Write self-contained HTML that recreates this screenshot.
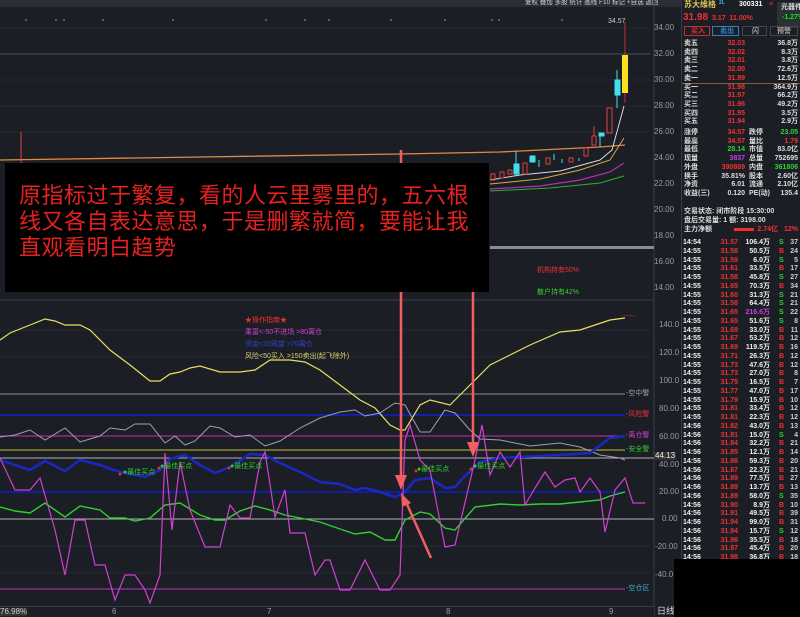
<!DOCTYPE html>
<html><head><meta charset="utf-8"><style>
*{margin:0;padding:0;box-sizing:border-box}
body{width:800px;height:617px;overflow:hidden;background:#1c1e26;font-family:"Liberation Sans","Noto Sans CJK SC",sans-serif;position:relative}
.a{position:absolute;white-space:nowrap;line-height:1}
.t{font-size:7px}
.ax{font-size:8px;color:#9a9ca4}
.r{color:#f23030}.g{color:#2fd02f}.w{color:#e8e8e8}.y{color:#e0d040}.m{color:#d040d0}
#rp div{position:absolute;white-space:nowrap;font-size:7px;line-height:1;font-weight:bold}
</style></head><body>
<div class="a" style="left:0;top:0;width:681px;height:7px;background:#2a2c36"></div>
<div class="a t w" style="left:525px;top:0;color:#cfd0d6;font-size:6.5px">复权 叠加 多股 统计 画线 F10 标记 +自选 返回</div>
<svg class="a" style="left:0;top:0" width="681" height="617">
<line x1="0" y1="54" x2="650" y2="54" stroke="#4a4c58" stroke-width="1"/>
<g stroke="#262833"><line x1="0" y1="28" x2="650" y2="28"/><line x1="0" y1="80" x2="650" y2="80"/><line x1="0" y1="106" x2="650" y2="106"/><line x1="0" y1="132" x2="650" y2="132"/></g>
<g fill="#a040e0"><circle cx="26" cy="20" r="1"/><circle cx="56" cy="20" r="1"/><circle cx="64" cy="20" r="1"/><circle cx="103" cy="20" r="1"/><circle cx="173" cy="20" r="1"/><circle cx="266" cy="20" r="1"/><circle cx="305" cy="20" r="1"/><circle cx="329" cy="20" r="1"/><circle cx="391" cy="20" r="1"/><circle cx="445" cy="20" r="1"/><circle cx="492" cy="20" r="1"/><circle cx="499" cy="20" r="1"/><circle cx="562" cy="20" r="1"/></g>
<line x1="654" y1="0" x2="654" y2="617" stroke="#3a3c46"/>
<polyline points="0,160 200,157 400,154 500,152 600,147 625,145" fill="none" stroke="#e08a40" stroke-width="1.3"/>
<polyline points="490,180 520,175 560,171 600,160 612,150 624,106" fill="none" stroke="#d8d8e0" stroke-width="1"/>
<polyline points="490,184 540,179 580,170 610,160 624,138" fill="none" stroke="#d0b040" stroke-width="1"/>
<polyline points="490,189 540,186 580,180 610,172 624,163" fill="none" stroke="#b030b0" stroke-width="1.2"/>
<polyline points="490,191 550,188 600,183 624,176" fill="none" stroke="#30b030" stroke-width="1"/>
<g stroke="#e04040" fill="none"><line x1="21" y1="132" x2="21" y2="165"/><rect x="491" y="174" width="4" height="6"/><rect x="500" y="172" width="4" height="6"/><rect x="508" y="170" width="4" height="4"/><rect x="523" y="163" width="4" height="11"/><rect x="546" y="158" width="4" height="6"/><rect x="569" y="158" width="4" height="4"/><rect x="584" y="148" width="4" height="8"/><rect x="592" y="136" width="4" height="9"/><line x1="594" y1="126" x2="594" y2="136"/><rect x="607" y="108" width="5" height="25"/></g>
<g fill="#40e0f0" stroke="#40e0f0"><line x1="516" y1="151" x2="516" y2="175"/><rect x="514" y="164" width="5" height="10"/><rect x="530" y="156" width="5" height="6"/><line x1="539" y1="160" x2="539" y2="167"/><line x1="554" y1="154" x2="554" y2="160"/><line x1="562" y1="159" x2="562" y2="163"/><line x1="579" y1="158" x2="579" y2="161"/><line x1="600" y1="134" x2="600" y2="147"/><rect x="599" y="133" width="5" height="3"/><line x1="617" y1="70" x2="617" y2="108"/><rect x="615" y="80" width="5" height="15"/></g>
<line x1="625" y1="22" x2="625" y2="103" stroke="#c03030"/>
<rect x="622" y="55" width="6" height="38" fill="#ffe020"/>
<rect x="490" y="246" width="164" height="3" fill="#8a8c94"/>
<line x1="0" y1="300" x2="654" y2="300" stroke="#3a3c46"/>
<line x1="0" y1="394" x2="625" y2="394" stroke="#8a8c94"/>
<line x1="0" y1="415" x2="625" y2="415" stroke="#1020a0" stroke-width="2"/>
<line x1="0" y1="436" x2="625" y2="436" stroke="#c030c0"/>
<line x1="0" y1="450" x2="625" y2="450" stroke="#a0a030" stroke-width="1.3"/>
<line x1="0" y1="458" x2="654" y2="458" stroke="#b0b0b8"/>
<line x1="0" y1="492" x2="625" y2="492" stroke="#1020a0" stroke-width="2"/>
<line x1="0" y1="519" x2="654" y2="519" stroke="#b0b0b8"/>
<line x1="0" y1="589" x2="625" y2="589" stroke="#c030c0"/>
<g stroke="#262833"><line x1="0" y1="330" x2="650" y2="330"/><line x1="0" y1="357" x2="650" y2="357"/><line x1="0" y1="546" x2="650" y2="546"/><line x1="0" y1="573" x2="650" y2="573"/></g>
<polyline fill="none" stroke="#e8e060" stroke-width="1.2" points="0,340 10,333 30,325 45,319 55,321 65,325 80,325 90,330 110,350 130,365 150,381 160,381 170,374 180,372 190,368 200,366 220,372 240,372 255,370 270,360 290,360 305,362 320,370 340,385 360,400 375,408 390,425 400,430 405,430 420,405 430,400 450,405 470,385 490,365 510,355 530,345 560,332 580,330 610,320 625,318"/>
<polyline fill="none" stroke="#a0a0a8" stroke-width="1" points="0,437 15,435 30,430 45,440 65,428 80,442 100,436 110,428 125,430 135,424 150,424 165,443 175,436 185,445 195,441 210,426 220,428 235,437 250,435 265,446 280,441 300,428 320,418 340,412 355,410 365,416 380,413 395,403 405,405 420,432 430,432 445,410 455,413 470,430 480,439 500,440 530,446 560,443 580,447 600,455 620,458 625,460"/>
<polyline fill="none" stroke="#1828c0" stroke-width="2.6" points="0,460 15,465 30,470 45,461 65,471 80,460 100,465 110,469 125,473 145,477 160,470 170,459 185,455 200,465 215,473 230,467 250,454 265,455 280,463 300,472 320,482 340,484 355,490 365,488 380,492 395,497 405,492 415,480 430,478 445,488 455,487 465,476 480,462 500,458 520,457 560,455 590,453 610,438 625,436"/>
<polyline fill="none" stroke="#30d030" stroke-width="1.4" points="0,507 15,511 30,513 45,503 65,517 80,506 100,510 110,518 125,518 135,521 150,518 165,505 180,503 200,515 215,520 225,520 240,511 255,506 270,510 285,515 300,518 320,522 340,529 355,534 370,532 385,540 395,540 405,520 420,512 430,514 445,528 455,530 475,507 500,504 520,505 540,504 560,504 580,502 600,500 610,496 625,492"/>
<polyline fill="none" stroke="#d040d0" stroke-width="1.2" points="0,458 15,490 30,490 40,478 55,530 65,575 75,520 85,520 95,565 105,565 115,600 125,575 135,575 145,590 150,603 160,575 165,453 172,530 180,462 190,510 205,547 220,547 230,505 240,518 250,518 260,462 265,452 275,517 285,490 290,533 305,533 315,575 325,560 330,560 340,590 350,590 365,560 380,590 390,590 400,575 405,440 410,425 420,460 430,470 445,547 455,545 475,460 482,425 490,475 500,452 510,467 520,452 525,505 535,488 545,472 555,487 565,480 575,478 580,492 590,478 600,492 605,532 615,490 625,478 633,503 645,503"/>
<g stroke="#f06060" stroke-width="2.5" fill="#f06060">
<line x1="401" y1="150" x2="401" y2="480"/><polygon points="395,475 407,475 401,490" stroke="none"/>
<line x1="473" y1="290" x2="473" y2="448"/><polygon points="467,442 479,442 473,457" stroke="none"/>
<line x1="431" y1="558" x2="406" y2="502"/><polygon points="401,493 411,503 402,507" stroke="none"/>
</g>
<line x1="473" y1="250" x2="473" y2="290" stroke="#c03030"/>
<g fill="#e03030"><circle cx="120" cy="474" r="1.5"/><circle cx="159" cy="468" r="1.5"/><circle cx="229" cy="468" r="1.5"/><circle cx="416" cy="471" r="1.5"/><circle cx="471" cy="469" r="1.5"/></g>
</svg>
<div class="a t r" style="left:245px;top:317px">★操作指南★</div>
<div class="a t m" style="left:245px;top:329px">乘富&lt;-50不进场 &gt;80离仓</div>
<div class="a t" style="left:245px;top:341px;color:#3040d0">资金&lt;20观望 &gt;70离仓</div>
<div class="a t" style="left:245px;top:353px;color:#d8d070">风险&lt;50买入 &gt;150卖出(起飞除外)</div>
<div class="a t r" style="left:537px;top:267px">机构持有50%</div>
<div class="a t g" style="left:537px;top:289px">散户持有42%</div>
<div class="a t g" style="left:123px;top:469px">●最佳买点</div>
<div class="a t g" style="left:160px;top:463px">●最佳买点</div>
<div class="a t g" style="left:230px;top:463px">●最佳买点</div>
<div class="a t g" style="left:417px;top:466px">●最佳买点</div>
<div class="a t g" style="left:473px;top:463px">●最佳买点</div>
<div class="a t" style="left:626px;top:390px;color:#a0a0a8">-空中警</div>
<div class="a t r" style="left:626px;top:411px">-风险警</div>
<div class="a t m" style="left:626px;top:432px">-离仓警</div>
<div class="a t g" style="left:626px;top:446px">-安全警</div>
<div class="a t" style="left:626px;top:585px;color:#40b0d0">-空仓区</div>
<div class="a t r" style="left:623px;top:313px">-----</div>
<div class="a t w" style="left:608px;top:18px;color:#ccc">34.57</div>
<div class="a" style="left:5px;top:163px;width:484px;height:129px;background:#000"></div>
<div class="a" style="left:19px;top:181px;font-size:22px;line-height:26px;letter-spacing:0.5px;color:#e82020;font-family:'Noto Sans CJK SC',sans-serif">原指标过于繁复，看的人云里雾里的，五六根<br>线又各自表达意思，于是删繁就简，要能让我<br>直观看明白趋势</div>
<div class="a ax" style="left:654px;top:24px">34.00</div><div class="a ax" style="left:654px;top:50px">32.00</div><div class="a ax" style="left:654px;top:76px">30.00</div><div class="a ax" style="left:654px;top:102px">28.00</div><div class="a ax" style="left:654px;top:128px">26.00</div><div class="a ax" style="left:654px;top:154px">24.00</div><div class="a ax" style="left:654px;top:180px">22.00</div><div class="a ax" style="left:654px;top:206px">20.00</div><div class="a ax" style="left:654px;top:232px">18.00</div><div class="a ax" style="left:654px;top:258px">16.00</div><div class="a ax" style="left:654px;top:284px">14.00</div>
<div class="a ax" style="left:659px;top:321px">140.0</div><div class="a ax" style="left:659px;top:349px">120.0</div><div class="a ax" style="left:659px;top:377px">100.0</div><div class="a ax" style="left:659px;top:405px">80.00</div><div class="a ax" style="left:659px;top:433px">60.00</div><div class="a ax" style="left:654px;top:452px;color:#eee;background:#333;padding:0 1px">44.13</div><div class="a ax" style="left:659px;top:461px">40.00</div><div class="a ax" style="left:659px;top:488px">20.00</div><div class="a ax" style="left:662px;top:515px">0.00</div><div class="a ax" style="left:655px;top:543px">-20.00</div><div class="a ax" style="left:655px;top:571px">-40.0</div>
<div class="a" style="left:0;top:606px;width:654px;height:11px;background:#1c1e26;border-top:1px solid #3a3c46"></div>
<div class="a ax" style="left:0;top:608px;color:#ccc;background:#333">76.98%</div>
<div class="a ax" style="left:112px;top:608px">6</div><div class="a ax" style="left:267px;top:608px">7</div><div class="a ax" style="left:446px;top:608px">8</div><div class="a ax" style="left:609px;top:608px">9</div>
<div class="a ax" style="left:657px;top:607px;color:#ddd;font-size:9px">日线</div>
<div id="rp" class="a" style="left:681px;top:0;width:119px;height:617px;background:#1c1e26;border-left:1px solid #3a3c46">
<div style="left:2px;top:1px;color:#d8c850;font-size:8px">苏大维格</div><div style="left:37px;top:1px;color:#40b0e0;font-size:5px">2L</div><div style="left:57px;top:1px;color:#fff;font-size:7px">300331</div><div style="left:87px;top:1px;color:#e03030">≡</div>
<div style="left:95px;top:2px;width:24px;height:26px;background:#2e3038"></div><div style="left:99px;top:4px;color:#ddd">元器件</div><div style="left:100px;top:14px;color:#2fd02f;background:#1a3a22">-1.27%</div>
<div style="left:1px;top:13px;color:#f23030;font-size:10px">31.98</div><div style="left:30px;top:15px;color:#f23030">3.17&nbsp; 11.00%</div>
<div style="left:2px;top:26px;width:26px;height:10px;border:1px solid #c03030"></div><div style="left:9px;top:28px;color:#e03030">买入</div>
<div style="left:30px;top:26px;width:27px;height:10px;border:1px solid #3080c0"></div><div style="left:38px;top:28px;color:#3080c0">卖出</div>
<div style="left:60px;top:26px;width:25px;height:10px;border:1px solid #444"></div><div style="left:70px;top:28px;color:#aaa">闪</div>
<div style="left:88px;top:26px;width:28px;height:10px;border:1px solid #444"></div><div style="left:95px;top:28px;color:#aaa">预警</div>
<div style="left:0;top:83px;width:119px;height:1px;background:#806030"></div>
</div>
<div class="a" style="left:674px;top:559px;width:126px;height:58px;background:#000"></div>
<script>
var rp=document.getElementById('rp');
function d(x,y,t,c,al){var e=document.createElement('div');e.textContent=t;e.style.top=y+'px';e.style.color=c;if(al){e.style.right=(119-x)+'px'}else{e.style.left=x+'px'}rp.appendChild(e)}
var ob=[['卖五','32.03','36.8万'],['卖四','32.02','8.3万'],['卖三','32.01','3.8万'],['卖二','32.00','72.6万'],['卖一','31.99','12.5万'],['买一','31.98','364.9万'],['买二','31.97','66.2万'],['买三','31.96','49.2万'],['买四','31.95','3.5万'],['买五','31.94','2.9万']];
ob.forEach(function(r,i){var y=40+i*8.7;d(2,y,r[0],'#ddd');d(64,y,r[1],'#f23030',1);d(117,y,r[2],'#ddd',1)});
var st=[['涨停','34.57','#f23030','跌停','23.05','#2fd02f'],['最高','34.57','#f23030','量比','1.79','#f23030'],['最低','28.14','#2fd02f','市值','83.0亿','#ddd'],['现量','3837','#c040e0','总量','752695','#ddd'],['外盘','390889','#f23030','内盘','361806','#2fd02f'],['换手','35.81%','#ddd','股本','2.60亿','#ddd'],['净资','6.01','#ddd','流通','2.10亿','#ddd'],['收益(三)','0.120','#ddd','PE(动)','135.4','#ddd']];
st.forEach(function(r,i){var y=129+i*8.7;d(2,y,r[0],'#ddd');d(64,y,r[1],r[2],1);d(67,y,r[3],'#ddd');d(117,y,r[4],r[5],1)});
d(2,208,'交易状态: 闭市阶段 15:30:00','#ddd');d(2,217,'盘后交易量: 1  额: 3198.00','#ddd');
d(2,226,'主力净额','#ddd');
var b=document.createElement('div');b.style.cssText='left:52px;top:228px;width:20px;height:3px;background:#f23030';rp.appendChild(b);
d(97,226,'2.74亿','#f23030',1);d(117,226,'12%','#f23030',1);
var tk=[['14:54','31.57','106.4万','S',37],['14:55','31.58','50.5万','B',24],['14:55','31.59','6.0万','S',5],['14:55','31.61','33.5万','B',17],['14:55','31.58','45.8万','S',27],['14:55','31.65','70.3万','B',34],['14:55','31.60','31.3万','S',21],['14:55','31.58','64.4万','S',21],['14:55','31.65','216.6万','S',22],['14:55','31.65','51.6万','S',8],['14:55','31.69','33.0万','B',11],['14:55','31.67','53.2万','B',12],['14:55','31.69','119.5万','B',16],['14:55','31.71','26.3万','B',12],['14:55','31.73','47.6万','B',12],['14:55','31.73','27.0万','B',8],['14:55','31.75','16.5万','B',7],['14:55','31.77','47.0万','B',17],['14:55','31.79','15.9万','B',10],['14:55','31.81','33.4万','B',12],['14:55','31.81','22.3万','B',12],['14:56','31.82','43.0万','B',13],['14:56','31.81','15.0万','S',4],['14:56','31.84','32.2万','B',21],['14:56','31.85','12.1万','B',14],['14:56','31.86','59.3万','B',20],['14:56','31.87','22.3万','B',21],['14:56','31.89','77.5万','B',27],['14:56','31.89','13.7万','B',13],['14:56','31.89','58.0万','S',35],['14:56','31.90','8.9万','B',10],['14:56','31.91','49.5万','B',39],['14:56','31.94','99.0万','B',31],['14:56','31.94','15.7万','S',12],['14:56','31.96','35.5万','B',18],['14:56','31.97','45.4万','B',20],['14:56','31.98','36.8万','B',18]];
tk.forEach(function(r,i){var y=239+i*8.75;d(1,y,r[0],'#eee');d(57,y,r[1],'#f23030',1);d(89,y,r[2],i==8?'#c040e0':'#eee',1);d(97,y,r[3],r[3]=='S'?'#2fd02f':'#f23030');d(117,y,String(r[4]),'#ccc',1)});
</script>
</body></html>
